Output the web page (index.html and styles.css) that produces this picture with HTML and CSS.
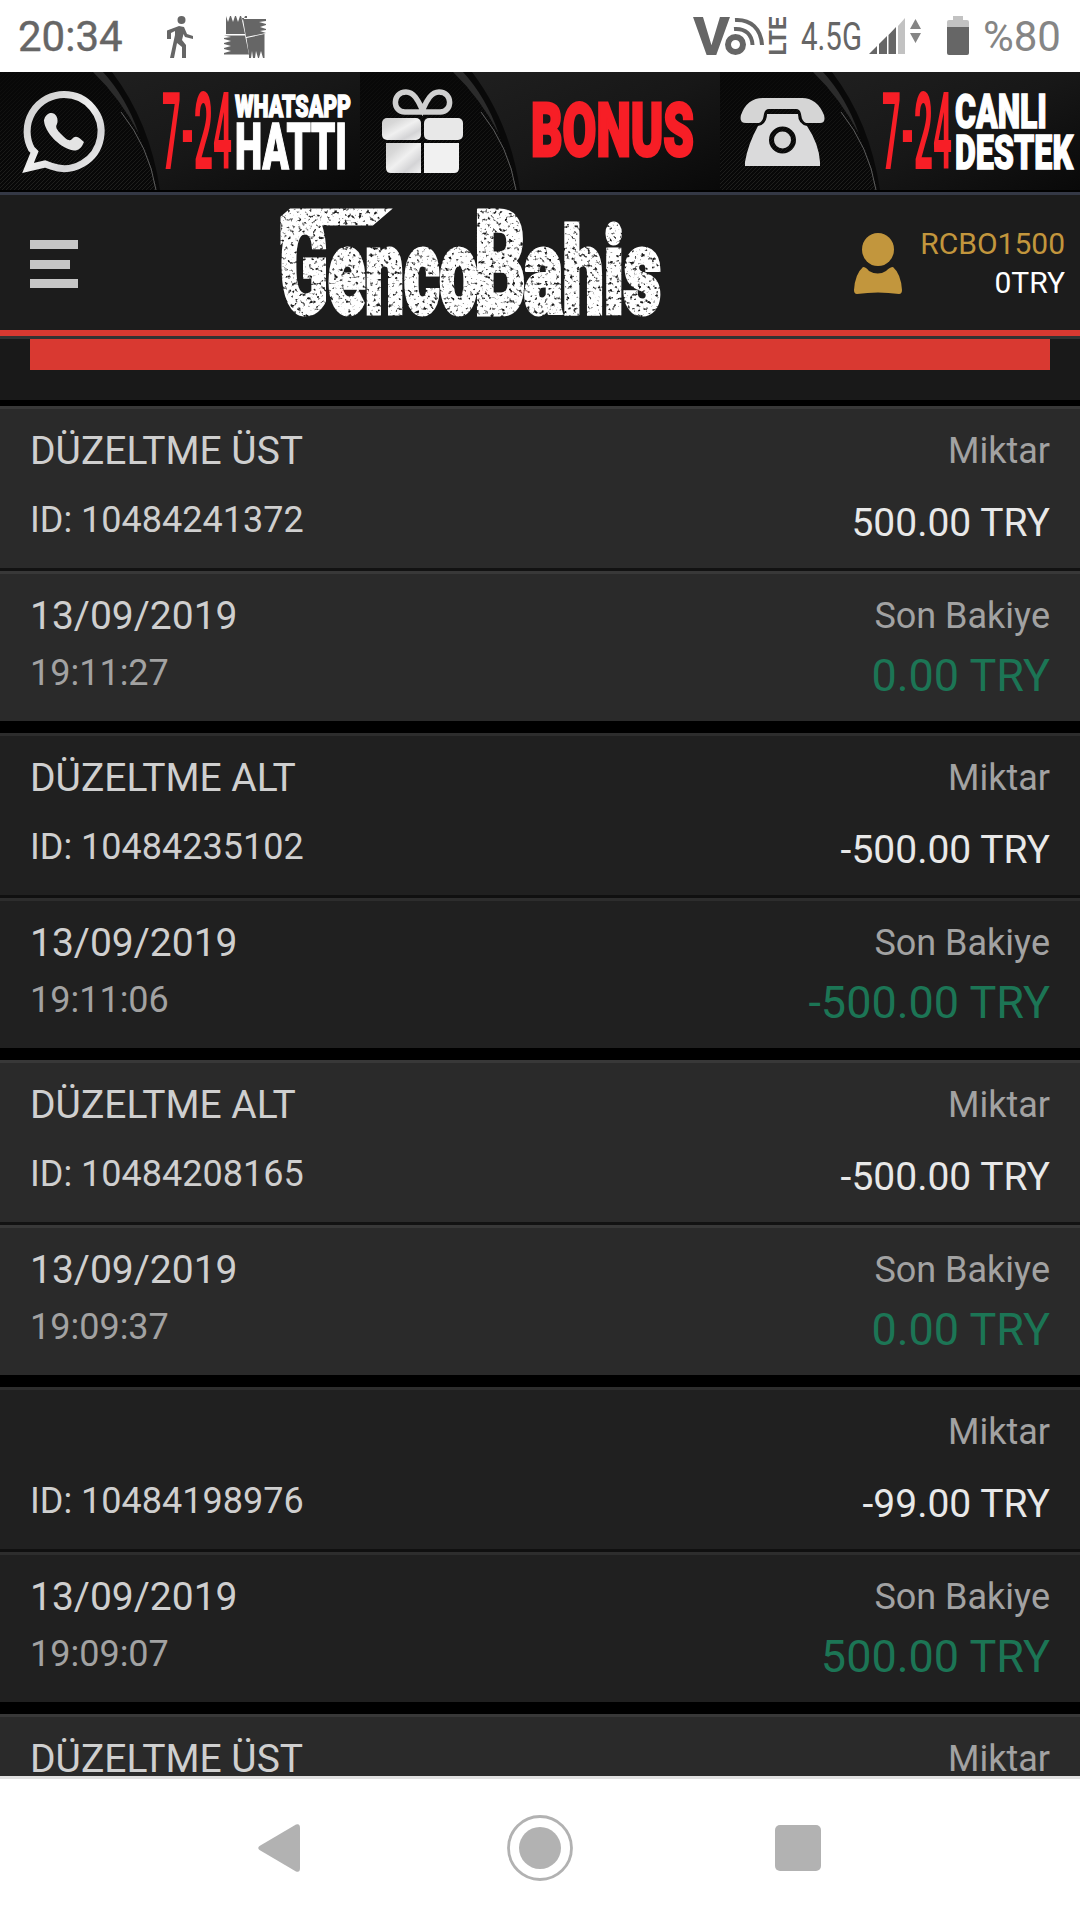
FILE: index.html
```html
<!DOCTYPE html>
<html lang="tr">
<head>
    <meta charset="UTF-8">
    <meta name="viewport" content="width=device-width, initial-scale=1.0">
    <title>GencoBahis - Hesap Hareketleri</title>
    <link rel="stylesheet" href="styles.css">
</head>
<body>
    <!-- Durum çubuğu -->
    <div class="status-bar">
        <span class="clock">20:34</span>
        <svg class="icon-walk" width="26" height="42" viewBox="0 0 26 42">
            <circle cx="14.5" cy="4" r="4"/>
            <path d="M12 10L17 11L20 18L26 20V23L18 21L16.500 18L15 24L19 29V42H15V31L10 27L7 42H3L8 19L8 15L4 17V23H0V14.500Z"/>
        </svg>
        <svg class="icon-puzzle" width="42" height="43" viewBox="0 0 42 43">
            <path d="M2 19V1L4 7L6 1H7L9 7L11 1H12L14 7L16 1H17L19 6L21 1H23V3H17.500L21 19Z"/>
            <path d="M19 4H42V6L35 7L42 9V10L36 12L42 14V15L36 16L42 18L22 22Z"/>
            <path d="M0 20.500H21L25 39.500H0V38L7 36L0 34V33L7 31L0 29V28L7 26L0 24V23L7 22Z"/>
            <path d="M22.500 23L40.500 19V43H39L37 36L35 43H34L32 36L31 43H29L28 36L27 43H25V40Z"/>
        </svg>
        <div class="status-right">
            <svg class="icon-volte" width="94" height="42" viewBox="0 0 94 42">
                <path d="M43 5C59 4 69 14 70 30M42 14C54 13 60 20 60.500 30" fill="none" stroke="#666" stroke-width="4"/>
                <text class="volte-v" x="1" y="40" textLength="37" lengthAdjust="spacingAndGlyphs">V</text>
                <circle cx="43.500" cy="29.500" r="7.500" fill="none" stroke="#666" stroke-width="6"/>
                <text class="volte-lte" transform="translate(93.500 40.500) rotate(-90)" textLength="39" lengthAdjust="spacingAndGlyphs">LTE</text>
            </svg>
            <svg class="icon-net" width="62" height="42" viewBox="0 0 62 42">
                <text class="net-type" x="0" y="35" textLength="61" lengthAdjust="spacingAndGlyphs">4.5G</text>
            </svg>
            <svg class="icon-signal" width="53" height="38" viewBox="0 0 53 38">
                <path d="M0 36L8 28V36ZM10 26L18 18V36H10ZM19.500 17L27 9V36H19.500Z"/>
                <path d="M29 8L36 0V36H29Z" fill="#c2c2c2"/>
                <path d="M41 11L46.500 1L52 11ZM41 15H52L46.500 25Z" fill="#858585"/>
            </svg>
            <svg class="icon-battery" width="22" height="40" viewBox="0 0 22 40">
                <path d="M6 0H16V4H20Q22 4 22 6V12H0V6Q0 4 2 4H6Z" fill="#c2c2c2"/>
                <path d="M0 11H22V37Q22 39 20 39H2Q0 39 0 37Z"/>
            </svg>
            <span class="battery-text">%80</span>
        </div>
    </div>

    <!-- Üst banner -->
    <svg class="banner" width="1080" height="118" viewBox="0 0 1080 118">
        <defs>
            <pattern id="mesh" width="4" height="4" patternUnits="userSpaceOnUse">
                <path d="M0 4L4 0" stroke="#20201e" stroke-width="1"/>
            </pattern>
            <linearGradient id="fade" x1="0" y1="0" x2="0" y2="1">
                <stop offset="0" stop-color="#080808" stop-opacity="0.900"/>
                <stop offset="1" stop-color="#080808" stop-opacity="0"/>
            </linearGradient>
            <linearGradient id="panel" x1="0" y1="0" x2="1" y2="1">
                <stop offset="0" stop-color="#1f1f1f"/>
                <stop offset="0.500" stop-color="#171717"/>
                <stop offset="1" stop-color="#090909"/>
            </linearGradient>
            <linearGradient id="silver" x1="0" y1="0" x2="1" y2="1">
                <stop offset="0" stop-color="#cfcfcf"/>
                <stop offset="0.250" stop-color="#d8d8d8"/>
                <stop offset="0.500" stop-color="#f0f0f0"/>
                <stop offset="0.750" stop-color="#d4d4d6"/>
                <stop offset="1" stop-color="#f2f2f2"/>
            </linearGradient>
            <g id="tile">
                <rect width="360" height="118" fill="#080808"/>
                <rect width="160" height="118" fill="url(#mesh)"/>
                <rect width="160" height="118" fill="url(#fade)"/>
                <path d="M93 0Q143 46 157 118H360V0Z" fill="#090909"/>
                <path d="M112 0Q150 50 160 118H360V0Z" fill="url(#panel)"/>
                <path d="M93 0H103Q126 25 139 62Q120 26 93 0Z" fill="#2b2b2b"/>
                <path d="M121 40Q149 75 156 118" fill="none" stroke="#5c5c5c" stroke-width="1"/>
            </g>
        </defs>

        <use href="#tile"/>
        <path d="M64 22.500A37 37 0 1 1 51.500 94.300L45 92L28 96L34.500 80L31.500 77A37 37 0 0 1 64 22.500Z" fill="none" stroke="url(#silver)" stroke-width="7"/>
        <path d="M50 41C56 40 59 47 57 52C55 55 57 58 61 62C66 67 69 70 72 67C76 62 80 66 84 70C80 80 74 80 66 76C54 70 44 57 44 48C45 44 47 42 50 41Z" fill="#e4e4e4"/>
        <text class="banner-red hours" x="162" y="97" textLength="70" lengthAdjust="spacingAndGlyphs">7-24</text>
        <text class="banner-white" x="235" y="45" font-size="31" textLength="116" lengthAdjust="spacingAndGlyphs">WHATSAPP</text>
        <text class="banner-white" x="235" y="97" font-size="64" textLength="112" lengthAdjust="spacingAndGlyphs">HATTI</text>

        <g transform="translate(360 0)">
            <use href="#tile"/>
            <path d="M62.500 40H45C32 40 32 20 46 20C55 20 59 31 62.500 38C66 31 70 20 79 20C93 20 93 40 80 40Z" fill="none" stroke="#d0d0d0" stroke-width="5.500"/>
            <rect x="22" y="46" width="39" height="22" rx="5" fill="url(#silver)"/>
            <rect x="64" y="46" width="39" height="22" rx="5" fill="#e8e8e8"/>
            <path d="M26 71H61V101H31Q26 101 26 96Z" fill="url(#silver)"/>
            <path d="M64 71H99V96Q99 101 94 101H64Z" fill="#f1f1f1"/>
            <text class="banner-red bonus" x="171" y="84" font-size="74" textLength="163" lengthAdjust="spacingAndGlyphs">BONUS</text>
        </g>

        <g transform="translate(720 0)">
            <use href="#tile"/>
            <path d="M43 26H82Q97 26 104 43Q106 51 100 51H86Q82 50 81 42Q80 37 76 37H49Q45 37 44 42Q43 50 39 51H26Q19 51 21 43Q27 26 43 26Z" fill="#d5d5d5"/>
            <path fill-rule="evenodd" d="M47 42H78Q78 52 87 54Q99 72 100 90V94H25V90Q28 72 38 54Q47 52 47 42ZM62.500 54.500A13.500 13.500 0 1 0 62.500 81.500A13.500 13.500 0 1 0 62.500 54.500Z" fill="#dadadb"/>
            <circle cx="62.500" cy="68" r="8.500" fill="#d5d5d5"/>
            <text class="banner-red hours" x="162" y="97" textLength="70" lengthAdjust="spacingAndGlyphs">7-24</text>
            <text class="banner-white" x="235" y="56" font-size="48" textLength="92" lengthAdjust="spacingAndGlyphs">CANLI</text>
            <text class="banner-white" x="235" y="97" font-size="49" textLength="118" lengthAdjust="spacingAndGlyphs">DESTEK</text>
        </g>
    </svg>

    <!-- Header -->
    <header class="header">
        <button class="menu-button" aria-label="Menü">
            <span></span>
            <span class="short"></span>
            <span></span>
        </button>
        <svg class="logo" width="386" height="116" viewBox="0 0 386 116">
            <defs>
                <filter id="grunge" x="0" y="0" width="386" height="116" filterUnits="userSpaceOnUse">
                    <feTurbulence type="fractalNoise" baseFrequency="0.28" numOctaves="2" seed="7"/>
                    <feColorMatrix type="matrix" values="0 0 0 0 1  0 0 0 0 1  0 0 0 0 1  5 0 0 0 -1.2"/>
                    <feComposite in="SourceGraphic" operator="in"/>
                </filter>
            </defs>
            <g class="logo-text" filter="url(#grunge)">
                <path d="M14 7H109L95 19H18L6 34V14Z"/>
                <text x="3" y="109" font-size="138" textLength="48" lengthAdjust="spacingAndGlyphs">G</text>
                <text x="51" y="109" font-size="118" textLength="150" lengthAdjust="spacingAndGlyphs">enco</text>
                <text x="197" y="110" font-size="144" textLength="52" lengthAdjust="spacingAndGlyphs">B</text>
                <text x="247" y="109" font-size="119" textLength="137" lengthAdjust="spacingAndGlyphs">ahis</text>
            </g>
        </svg>
        <div class="user">
            <svg class="avatar" width="48" height="62" viewBox="0 0 48 62">
                <ellipse cx="24" cy="16.500" rx="16" ry="16.500"/>
                <path d="M9 34Q12 34 15 38Q24 43 32 38Q36 34 39 34Q47 41 48 57Q48 61 45 61Q24 58 3 61Q0 61 0 57Q1 41 9 34Z"/>
            </svg>
            <div class="user-info">
                <div class="user-name">RCBO1500</div>
                <div class="user-balance">0TRY</div>
            </div>
        </div>
    </header>

    <!-- Hesap hareketleri -->
    <main class="content">
        <div class="filter-area">
            <div class="filter-button"></div>
        </div>

        <div class="record">
            <div class="row row-top">
                <div class="left">
                    <div class="title">DÜZELTME ÜST</div>
                    <div class="record-id">ID: 10484241372</div>
                </div>
                <div class="right">
                    <div class="label">Miktar</div>
                    <div class="amount">500.00 TRY</div>
                </div>
            </div>
            <div class="row row-bottom">
                <div class="left">
                    <div class="title">13/09/2019</div>
                    <div class="time">19:11:27</div>
                </div>
                <div class="right">
                    <div class="label">Son Bakiye</div>
                    <div class="balance">0.00 TRY</div>
                </div>
            </div>
        </div>

        <div class="record dark">
            <div class="row row-top">
                <div class="left">
                    <div class="title">DÜZELTME ALT</div>
                    <div class="record-id">ID: 10484235102</div>
                </div>
                <div class="right">
                    <div class="label">Miktar</div>
                    <div class="amount">-500.00 TRY</div>
                </div>
            </div>
            <div class="row row-bottom">
                <div class="left">
                    <div class="title">13/09/2019</div>
                    <div class="time">19:11:06</div>
                </div>
                <div class="right">
                    <div class="label">Son Bakiye</div>
                    <div class="balance">-500.00 TRY</div>
                </div>
            </div>
        </div>

        <div class="record">
            <div class="row row-top">
                <div class="left">
                    <div class="title">DÜZELTME ALT</div>
                    <div class="record-id">ID: 10484208165</div>
                </div>
                <div class="right">
                    <div class="label">Miktar</div>
                    <div class="amount">-500.00 TRY</div>
                </div>
            </div>
            <div class="row row-bottom">
                <div class="left">
                    <div class="title">13/09/2019</div>
                    <div class="time">19:09:37</div>
                </div>
                <div class="right">
                    <div class="label">Son Bakiye</div>
                    <div class="balance">0.00 TRY</div>
                </div>
            </div>
        </div>

        <div class="record dark">
            <div class="row row-top">
                <div class="left">
                    <div class="title"></div>
                    <div class="record-id">ID: 10484198976</div>
                </div>
                <div class="right">
                    <div class="label">Miktar</div>
                    <div class="amount">-99.00 TRY</div>
                </div>
            </div>
            <div class="row row-bottom">
                <div class="left">
                    <div class="title">13/09/2019</div>
                    <div class="time">19:09:07</div>
                </div>
                <div class="right">
                    <div class="label">Son Bakiye</div>
                    <div class="balance">500.00 TRY</div>
                </div>
            </div>
        </div>

        <div class="record">
            <div class="row row-top">
                <div class="left">
                    <div class="title">DÜZELTME ÜST</div>
                </div>
                <div class="right">
                    <div class="label">Miktar</div>
                </div>
            </div>
        </div>
    </main>

    <!-- Navigasyon çubuğu -->
    <nav class="nav-bar">
        <svg class="nav-back" width="42" height="48" viewBox="0 0 42 48">
            <path d="M38 0.500Q42 -1 42 4V44Q42 49 38 47.500L1.500 26Q-1 24 1.500 22Z"/>
        </svg>
        <svg class="nav-home" width="66" height="66" viewBox="0 0 66 66">
            <circle cx="33" cy="33" r="31.500" fill="none" stroke="#b2b2b2" stroke-width="2.800"/>
            <circle cx="33" cy="33" r="21"/>
        </svg>
        <div class="nav-recent"></div>
    </nav>
</body>
</html>
```
FILE: styles.css
```css
* {
    box-sizing: border-box;
}
body {
    margin: 0;
    width: 1080px;
    height: 1920px;
    overflow: hidden;
    display: flex;
    flex-direction: column;
    font-family: Roboto, "Liberation Sans", sans-serif;
    background-color: #000;
}
svg {
    display: block;
    flex-shrink: 0;
    overflow: visible;
}

/* Durum çubuğu */
.status-bar {
    display: flex;
    align-items: flex-start;
    height: 72px;
    flex-shrink: 0;
    padding: 0 19px 0 18px;
    background-color: #fff;
    color: #666;
    fill: #666;
}
.clock,
.battery-text {
    font-size: 42px;
    line-height: 74px;
    white-space: nowrap;
}
.clock {
    width: 149px;
    -webkit-text-stroke: 0.4px #666;
}
.icon-walk {
    margin-top: 16px;
}
.icon-puzzle {
    margin: 15px 0 0 31px;
}
.status-right {
    display: flex;
    margin-left: auto;
}
.icon-volte {
    margin: 15px 15px 0 0;
}
.volte-v {
    font-size: 53px;
    font-weight: 800;
}
.volte-lte {
    font-size: 23px;
    font-weight: 700;
}
.icon-net {
    margin: 15px 6px 0 0;
}
.net-type {
    font-size: 38px;
}
.icon-signal {
    margin: 18px 25px 0 0;
}
.icon-battery {
    margin: 16px 14px 0 0;
}
.battery-text {
    width: 78px;
    color: #858585;
}

/* Banner */
.banner {
    overflow: hidden;
}
.banner-red {
    fill: #f71e26;
    stroke: #f71e26;
    stroke-width: 0;
    font-weight: 900;
}
.bonus {
    stroke-width: 3px;
}
.hours {
    font-size: 108px;
    font-weight: 700;
}
.banner-white {
    fill: #fff;
    stroke: #fff;
    stroke-width: 1.5px;
    font-weight: 900;
}

/* Header */
.header {
    display: flex;
    align-items: flex-start;
    height: 147px;
    flex-shrink: 0;
    padding: 0 15px 0 30px;
    margin-top: 2px;
    background-color: #1c1c1c;
    border-top: 3px solid #343845;
    border-bottom: 3px solid #333;
    box-shadow: inset 0 -6px #d93931;
}
.menu-button {
    display: flex;
    flex-direction: column;
    justify-content: space-between;
    margin: 45px 0 0;
    padding: 0;
    width: 48px;
    height: 48px;
    border: none;
    background: none;
}
.menu-button span {
    width: 48px;
    height: 9px;
    background-color: #c6c6c6;
}
.menu-button .short {
    width: 40px;
}
.logo {
    margin: 9px 0 0 199px;
}
.logo-text {
    fill: #fff;
    stroke: #fff;
    stroke-width: 5px;
    font-weight: 900;
}
.user {
    display: flex;
    margin-left: auto;
}
.avatar {
    margin: 38px 18px 0 0;
    fill: #c2963d;
}
.user-info {
    margin-top: 29px;
    font-size: 30px;
    line-height: 39px;
    text-align: right;
}
.user-name {
    color: #c2963d;
}
.user-balance {
    color: #fff;
}

/* Kayıtlar */
.content {
    height: 1437px;
    flex-shrink: 0;
    overflow: hidden;
}
.filter-area {
    height: 61px;
    padding: 0 30px;
    margin-bottom: 6px;
    background-color: #191919;
}
.filter-button {
    height: 31px;
    background-color: #d93931;
}
.record {
    margin-bottom: 12px;
}
.row {
    display: flex;
    justify-content: space-between;
    padding: 12px 30px 0;
    background-color: #2a2a2a;
    border-top: 3px solid #383838;
}
.dark .row {
    background-color: #202020;
    border-top-color: #2d2d2d;
}
.row-top {
    height: 165px;
    border-bottom: 3px solid #121212;
}
.dark .row-top {
    border-bottom-color: #101010;
}
.row-bottom {
    height: 150px;
}
.right {
    text-align: right;
}
.title {
    height: 60px;
    font-size: 39px;
    line-height: 60px;
    color: #cfcfcf;
}
.record-id {
    font-size: 36px;
    line-height: 78px;
    color: #cfcfcf;
}
.time {
    font-size: 36px;
    line-height: 54px;
    color: #a2a2a2;
}
.label {
    font-size: 36px;
    line-height: 60px;
    color: #a2a2a2;
}
.amount {
    font-size: 39px;
    line-height: 84px;
    color: #e8e8e8;
}
.balance {
    font-size: 45px;
    line-height: 59px;
    color: #1c7555;
}

/* Navigasyon */
.nav-bar {
    display: flex;
    align-items: center;
    height: 144px;
    flex-shrink: 0;
    padding: 0 0 3px 258px;
    background-color: #fff;
    border-top: 3px solid #e0e0e0;
    fill: #b2b2b2;
}
.nav-home {
    margin: 0 202px 0 207px;
}
.nav-recent {
    width: 46px;
    height: 46px;
    border-radius: 5px;
    background-color: #b2b2b2;
}
```
